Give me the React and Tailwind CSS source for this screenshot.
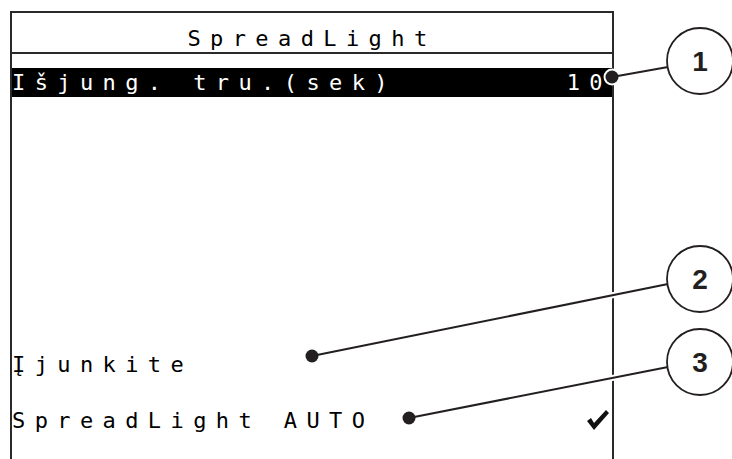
const mono = { fontFamily: '"DejaVu Sans Mono", "Liberation Mono", monospace' };

function Callouts() {
  const ink = "#231f20";
  const leaders = [
    { x1: 612, y1: 77, x2: 668, y2: 67 },
    { x1: 312, y1: 356, x2: 668, y2: 284 },
    { x1: 409, y1: 418, x2: 668, y2: 367 },
  ];
  const circles = [
    { cx: 700, cy: 61, n: "1" },
    { cx: 700, cy: 279, n: "2" },
    { cx: 700, cy: 362, n: "3" },
  ];
  return (
    <svg className="absolute inset-0 pointer-events-none" width="732" height="459" viewBox="0 0 732 459">
      {leaders.map((l, i) => (
        <g key={i}>
          <line x1={l.x1} y1={l.y1} x2={l.x2} y2={l.y2} stroke="#fff" strokeWidth="6" />
          <circle cx={l.x1} cy={l.y1} r="8.5" fill="#fff" />
          <line x1={l.x1} y1={l.y1} x2={l.x2} y2={l.y2} stroke={ink} strokeWidth="2" />
          <circle cx={l.x1} cy={l.y1} r="6.5" fill={ink} />
        </g>
      ))}
      {circles.map((c) => (
        <g key={c.n}>
          <circle cx={c.cx} cy={c.cy} r="33" fill="#fff" stroke={ink} strokeWidth="1.8" />
          <text
            x={c.cx}
            y={c.cy + 10}
            textAnchor="middle"
            fontFamily='"Liberation Sans", Arial, sans-serif'
            fontWeight="700"
            fontSize="28"
            fill={ink}
          >
            {c.n}
          </text>
        </g>
      ))}
    </svg>
  );
}

function Check() {
  return (
    <svg width="24" height="24" viewBox="0 0 24 24" className="shrink-0">
      <polygon points="1,12 5,9 8,14 20,1 23,4 8,21" fill="#111" />
    </svg>
  );
}

export default function App() {
  return (
    <div className="relative w-[732px] h-[459px] bg-white overflow-hidden text-black" style={mono}>
      <div className="ml-[10px] mt-[11px] w-[604px] h-[448px] border-2 border-b-0 border-[#2a2a2a] flex flex-col">
        <div className="h-[39px] flex items-end justify-center border-b-2 border-[#2a2a2a] box-content">
          <span className="text-[22px] leading-[26px] tracking-[9.4px]">SpreadLight</span>
        </div>
        <div className="mt-[14px] h-[29px] bg-black text-white flex justify-between items-center text-[22px] leading-[29px] tracking-[9.4px]">
          <span>Išjung. tru.(sek)</span>
          <span>10</span>
        </div>
        <div className="mt-[253px] h-[29px] text-[22px] leading-[29px] tracking-[9.4px]">Įjunkite</div>
        <div className="mt-[27px] h-[29px] flex items-center justify-between pr-[2px] text-[22px] leading-[29px] tracking-[9.4px]">
          <span>SpreadLight AUTO</span>
          <Check />
        </div>
      </div>
      <Callouts />
    </div>
  );
}
